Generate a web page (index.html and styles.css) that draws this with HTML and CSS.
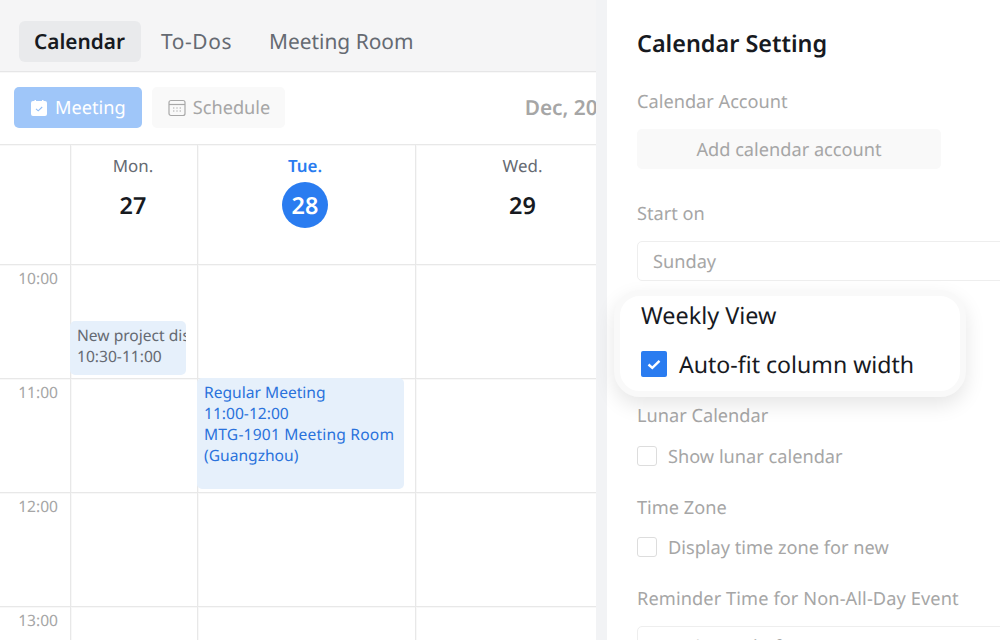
FILE: index.html
```html
<!DOCTYPE html>
<html lang="en">
<head>
<meta charset="utf-8">
<title>Calendar Setting</title>
<link rel="stylesheet" href="styles.css">
</head>
<body>
<div class="app">
  <main class="main">
    <nav class="tabs">
      <a class="tab tab-active">Calendar</a>
      <a class="tab tab-todos">To-Dos</a>
      <a class="tab">Meeting Room</a>
    </nav>
    <div class="toolbar">
      <button class="btn btn-primary">
        <svg class="btn-icon" viewBox="0 0 18 18"><path d="M3 2h1.500V1h1.500v1h6V1h1.500v1H15a2 2 0 0 1 2 2v11a2 2 0 0 1-2 2H3a2 2 0 0 1-2-2V4a2 2 0 0 1 2-2z" fill="#fff"/><path d="M6 9.800l2.200 2L12.200 8" fill="none" stroke="#8fbcf7" stroke-width="1.100"/></svg>
        Meeting
      </button>
      <button class="btn btn-muted">
        <svg class="btn-icon" viewBox="0 0 18 18"><rect x="1" y="1.500" width="16" height="15" rx="2" fill="none" stroke="#a8a8a8" stroke-width="1.200"/><path d="M1 5.500h16" stroke="#a8a8a8" stroke-width="1.200"/><path d="M5 9h1.400M8.300 9h1.400M11.600 9h1.400M5 12h1.400M8.300 12h1.400M11.600 12h1.400" stroke="#a8a8a8" stroke-width="1"/></svg>
        Schedule
      </button>
      <span class="month">Dec, 2021</span>
    </div>
    <div class="cal">
      <div class="cal-head">
        <div class="gutter"></div>
        <div class="day"><span class="dow">Mon.</span><span class="date">27</span></div>
        <div class="day today"><span class="dow">Tue.</span><span class="date">28</span></div>
        <div class="day"><span class="dow">Wed.</span><span class="date">29</span></div>
        <div class="day"></div>
      </div>
      <div class="row">
        <div class="gutter"><span class="hour">10:00</span></div>
        <div class="cell"><div class="event event-grey"><div class="clip">New project discussion</div><div>10:30-11:00</div></div></div>
        <div class="cell"></div><div class="cell"></div><div class="cell"></div>
      </div>
      <div class="row">
        <div class="gutter"><span class="hour">11:00</span></div>
        <div class="cell"></div>
        <div class="cell"><div class="event event-blue">Regular Meeting<br>11:00-12:00<br><span class="room">MTG-1901 Meeting Room</span> (Guangzhou)</div></div>
        <div class="cell"></div><div class="cell"></div>
      </div>
      <div class="row">
        <div class="gutter"><span class="hour">12:00</span></div>
        <div class="cell"></div><div class="cell"></div><div class="cell"></div><div class="cell"></div>
      </div>
      <div class="row">
        <div class="gutter"><span class="hour">13:00</span></div>
        <div class="cell"></div><div class="cell"></div><div class="cell"></div><div class="cell"></div>
      </div>
    </div>
  </main>
  <div class="divider"></div>
  <aside class="panel">
    <h1 class="panel-title">Calendar Setting</h1>
    <div class="label label-account">Calendar Account</div>
    <div class="add">Add calendar account</div>
    <div class="label label-start">Start on</div>
    <div class="select">Sunday</div>
    <div class="label label-lunar">Lunar Calendar</div>
    <label class="check"><span class="box"></span><span class="check-text">Show lunar calendar</span></label>
    <div class="label label-zone">Time Zone</div>
    <label class="check"><span class="box"></span><span class="check-text">Display time zone for new</span></label>
    <div class="label label-remind">Reminder Time for Non-All-Day Event</div>
    <div class="select select-cut">15 minutes before</div>
  </aside>
  <section class="popup">
    <div class="popup-title">Weekly View</div>
    <div class="popup-check">
      <svg class="popup-box" viewBox="0 0 26 26"><rect width="26" height="26" rx="2" fill="#2a7cf0"/><path d="M7.500 13.500l3.800 3.300 7.200-7" fill="none" stroke="#fff" stroke-width="2.400"/></svg>
      Auto-fit column width
    </div>
  </section>
</div>
</body>
</html>
```
FILE: styles.css
```css
* { box-sizing: border-box; }
html, body { margin: 0; height: 100%; overflow: hidden; }
body { font-family: "Noto Sans", "Liberation Sans", sans-serif; background: #fff; color: #1f2329; text-rendering: geometricPrecision; }
.app { position: relative; display: flex; width: 1000px; height: 640px; overflow: hidden; }

.main { width: 596px; flex: none; overflow: hidden; }
.divider { width: 11px; flex: none; background: #f2f3f5; }
.panel { flex: 1; min-width: 0; padding: 27px 0 0 30px; overflow: hidden; }

.tabs { display: flex; align-items: flex-start; height: 72px; padding: 21px 0 0 19px; background: #f5f5f6; border-bottom: 1px solid #e6e6e7; box-shadow: 0 1px 0 #f8f8f8; }
.tab { height: 41px; line-height: 43px; padding: 0 18.5px; border-radius: 6px; font-size: 20.9px; color: #656a72; white-space: nowrap; }
.tab-active { width: 122px; margin-right: 1.5px; padding: 0 0 0 15px; background: #e9eaec; color: #171a1f; font-weight: 600; font-size: 20.8px; }
.tab-todos { letter-spacing: .6px; }

.toolbar { display: flex; align-items: center; height: 73px; padding: 0 0 1px 14px; border-bottom: 1px solid #e8e8e8; box-shadow: 0 1px 0 #f8f8f8; white-space: nowrap; }
.btn { display: flex; align-items: center; gap: 7px; height: 41px; padding: 0 16px; border: 0; border-radius: 5px; font: inherit; font-size: 18.2px; text-rendering: inherit; }
.btn-primary { width: 128px; background: #9fc6f9; color: #fff; }
.btn-muted { width: 133px; margin-left: 10px; background: #f9f9f9; color: #a6a6a6; }
.btn-icon { width: 18px; height: 18px; flex: none; }
.month { margin-left: 240px; font-size: 20.8px; font-weight: 600; color: #a6a6a6; }

.cal-head, .row { display: grid; grid-template-columns: 70px 127px 218px 216px 1fr; }
.cal-head { height: 120px; border-bottom: 1px solid #e8e8e8; box-shadow: 0 1px 0 #f8f8f8; }
.row { height: 114px; border-bottom: 1px solid #e8e8e8; box-shadow: 0 1px 0 #f8f8f8; }
.day, .cell { position: relative; border-left: 1px solid #e8e8e8; box-shadow: inset 1px 0 0 #f8f8f8; }
.day { display: flex; flex-direction: column; align-items: center; padding: 7px 2px 0 0; }
.dow { height: 27px; line-height: 27px; font-size: 16.9px; color: #656a72; }
.date { display: flex; align-items: center; justify-content: center; width: 46px; height: 46px; margin-top: 3px; border-radius: 50%; font-size: 23.4px; font-weight: 600; color: #171a1f; }
.today { padding-right: 3px; }
.today .dow { font-weight: 600; color: #2a7cf0; }
.today .date { background: #2a7cf0; color: #fff; }

.gutter { position: relative; }
.hour { display: block; width: 58px; padding-top: 1px; text-align: right; font-size: 15.6px; line-height: 24px; color: #a6a6a6; }

.event { position: absolute; z-index: 1; font-size: 15.6px; line-height: 21px; border-radius: 5px; overflow: hidden; }
.event-grey { top: 56px; left: -1px; width: 116px; height: 54px; padding: 4px 0 0 7px; background: #e6f0fb; color: #656a72; white-space: nowrap; }
.clip { overflow: hidden; }
.event-blue { top: -1px; left: -1px; width: 207px; height: 111px; padding: 4px 7px; background: #e6f0fb; color: #2a72dc; }
.room { letter-spacing: .18px; }

.panel-title { margin: 0; font-size: 23.4px; line-height: 32px; font-weight: 600; color: #171a1f; white-space: nowrap; }
.label { font-size: 18.2px; line-height: 24px; color: #a6a6a6; white-space: nowrap; }
.label-account { margin-top: 31px; }
.add { width: 304px; height: 40px; margin-top: 15px; line-height: 42px; text-align: center; border-radius: 5px; background: #f9f9f9; font-size: 18.2px; color: #a6a6a6; }
.label-start { margin-top: 33px; }
.select { width: 420px; height: 40px; margin-top: 14.5px; padding-left: 15px; line-height: 40px; border: 1px solid #eeeeee; border-radius: 5px; font-size: 18.2px; color: #a6a6a6; white-space: nowrap; }
.label-lunar { margin-top: 123px; }
.check { display: flex; align-items: center; gap: 11px; height: 24px; margin-top: 16px; font-size: 18.2px; color: #a6a6a6; white-space: nowrap; }
.check-text { padding-top: 2px; }
.box { width: 20px; height: 20px; border: 1px solid #dddddd; border-radius: 3px; }
.label-zone { margin-top: 28px; }
.label-zone + .check { margin-top: 15px; }
.label-remind { margin-top: 28px; letter-spacing: .1px; }
.select-cut { margin-top: 15px; }

.popup { position: absolute; z-index: 2; left: 614px; top: 290px; width: 352px; height: 107px; padding: 3px 0 0 21px; background: #fff; border: 6px solid #f9f9f9; border-radius: 26px; box-shadow: 0 8px 20px rgba(0, 0, 0, .1); color: #171a1f; }
.popup-title { font-size: 23.4px; line-height: 32px; white-space: nowrap; }
.popup-check { display: flex; align-items: center; gap: 12px; margin-top: 17px; font-size: 23.1px; line-height: 32px; white-space: nowrap; }
.popup-box { width: 26px; height: 26px; flex: none; }
```
